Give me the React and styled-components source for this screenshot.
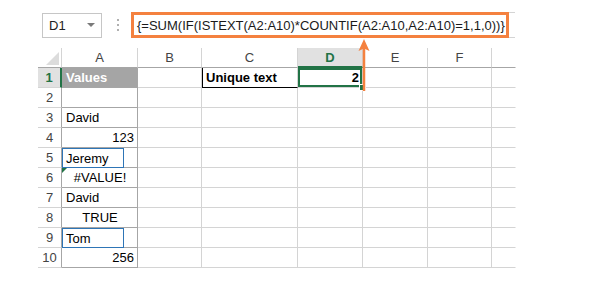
import React from "react";
import styled, { createGlobalStyle, css } from "styled-components";

const GlobalStyle = createGlobalStyle`
  html, body {
    margin: 0;
    padding: 0;
    background: #ffffff;
  }
  body {
    font-family: "Liberation Sans", Arial, sans-serif;
  }
`;

const GREEN = "#217346";
const ORANGE = "#f4813f";
const GRID = "#d4d4d4";
const DARK = "#a6a6a6";

const Page = styled.div`
  position: relative;
  width: 591px;
  height: 299px;
  box-sizing: border-box;
  padding: 12px 0 0 38px;
`;

const Toolbar = styled.div`
  display: flex;
  align-items: center;
  height: 26px;
`;

const NameBox = styled.div`
  margin-left: 4px;
  width: 60px;
  height: 25px;
  box-sizing: border-box;
  border: 1px solid #c6c6c6;
  display: flex;
  align-items: center;
  justify-content: space-between;
  padding: 0 6px 0 6px;
  font-size: 13px;
  color: #222;
`;

const DropArrow = styled.span`
  width: 0;
  height: 0;
  border-left: 4px solid transparent;
  border-right: 4px solid transparent;
  border-top: 4px solid #7a7a7a;
`;

const Dots = styled.div`
  margin-left: 15px;
  display: flex;
  flex-direction: column;
  gap: 3px;

  span {
    width: 2px;
    height: 2px;
    background: #b0b0b0;
  }
`;

const FormulaBar = styled.div`
  margin-left: 12px;
  width: 384px;
  height: 26px;
  box-sizing: border-box;
  border-top: 1px solid ${GRID};
  border-bottom: 1px solid ${GRID};
  display: flex;
`;

const FormulaBox = styled.div`
  flex: 1;
  margin: -1px 6px -1px 0;
  box-sizing: border-box;
  border: 3px solid ${ORANGE};
  display: flex;
  align-items: center;
  padding-left: 3px;
  font-size: 13px;
  color: #1a1a1a;
  white-space: nowrap;
`;

const Grid = styled.div`
  margin-top: 10px;
  display: grid;
  grid-template-columns: 24px 76px 64px 96px 65px 65px 64px 24px;
  grid-auto-rows: 20px;
  font-size: 13px;
`;

const ColHead = styled.div`
  box-sizing: border-box;
  border-right: 1px solid ${(p) => (p.$last ? "transparent" : GRID)};
  border-bottom: 1px solid ${DARK};
  display: flex;
  align-items: center;
  justify-content: center;
  color: #444;
  background: ${(p) => (p.$active ? "#e1e1e1" : "#fff")};
  ${(p) =>
    p.$active &&
    css`
      color: ${GREEN};
      font-weight: bold;
      border-bottom: 2px solid ${GREEN};
    `}
`;

const Corner = styled(ColHead)`
  position: relative;
  &::after {
    content: "";
    position: absolute;
    right: 2px;
    bottom: 2px;
    width: 0;
    height: 0;
    border-left: 13px solid transparent;
    border-bottom: 13px solid #dcdcdc;
  }
`;

const RowHead = styled.div`
  box-sizing: border-box;
  border-right: 1px solid ${DARK};
  border-bottom: 1px solid ${GRID};
  display: flex;
  align-items: center;
  justify-content: center;
  color: #444;
  ${(p) =>
    p.$active &&
    css`
      background: #e1e1e1;
      color: ${GREEN};
      font-weight: bold;
      border-right: 2px solid ${GREEN};
    `}
`;

const Cell = styled.div`
  position: relative;
  box-sizing: border-box;
  border-right: 1px solid ${(p) => (p.$last ? "transparent" : p.$dark ? DARK : GRID)};
  border-bottom: 1px solid ${(p) => (p.$dark ? DARK : GRID)};
  display: flex;
  align-items: center;
  justify-content: ${(p) =>
    p.$align === "right" ? "flex-end" : p.$align === "center" ? "center" : "flex-start"};
  padding: 0 3px 0 4px;
  color: #000;
  white-space: nowrap;
  font-weight: ${(p) => (p.$bold ? "bold" : "normal")};
  ${(p) =>
    p.$filled &&
    css`
      background: #a5a5a5;
      color: #fff;
    `}
  ${(p) =>
    p.$boxed &&
    css`
      border-bottom: 1px solid #000;
      box-shadow: inset 1px 0 0 #000;
    `}
  ${(p) =>
    p.$selected &&
    css`
      box-shadow: inset 0 0 0 2px ${GREEN};
    `}
`;

const TextBox = styled.span`
  margin-left: -4px;
  width: 62px;
  height: 20px;
  box-sizing: border-box;
  border: 1.5px solid #2e75b6;
  display: flex;
  align-items: center;
  padding-left: 3px;
  align-self: flex-start;
`;

const ErrorMark = styled.span`
  position: absolute;
  left: 0;
  top: 0;
  width: 0;
  height: 0;
  border-top: 5px solid ${GREEN};
  border-right: 5px solid transparent;
`;

const FillHandle = styled.span`
  position: absolute;
  right: -4px;
  bottom: -4px;
  width: 5px;
  height: 5px;
  background: ${GREEN};
  border: 1px solid #fff;
  z-index: 2;
`;

const Arrow = styled.svg`
  position: absolute;
  left: 358px;
  top: 39px;
  z-index: 3;
`;

const columns = ["A", "B", "C", "D", "E", "F"];

const rows = [
  { a: "Values", filled: true },
  {},
  { a: "David" },
  { a: "123", align: "right" },
  { a: "Jeremy", box: true },
  { a: "#VALUE!", align: "center", error: true },
  { a: "David" },
  { a: "TRUE", align: "center" },
  { a: "Tom", box: true },
  { a: "256", align: "right" },
];

export default function App() {
  return (
    <Page>
      <GlobalStyle />
      <Toolbar>
        <NameBox>
          D1
          <DropArrow />
        </NameBox>
        <Dots>
          <span />
          <span />
          <span />
        </Dots>
        <FormulaBar>
          <FormulaBox>{"{=SUM(IF(ISTEXT(A2:A10)*COUNTIF(A2:A10,A2:A10)=1,1,0))}"}</FormulaBox>
        </FormulaBar>
      </Toolbar>

      <Grid>
        <Corner />
        {columns.map((c) => (
          <ColHead key={c} $active={c === "D"}>
            {c}
          </ColHead>
        ))}
        <ColHead $last />

        {rows.map((r, i) => (
          <React.Fragment key={i}>
            <RowHead $active={i === 0}>{i + 1}</RowHead>
            <Cell $dark $align={r.align} $filled={r.filled} $bold={r.filled}>
              {r.error && <ErrorMark />}
              {r.box ? <TextBox>{r.a}</TextBox> : r.a}
            </Cell>
            <Cell />
            <Cell $boxed={i === 0} $bold={i === 0}>
              {i === 0 ? "Unique text" : ""}
            </Cell>
            <Cell $selected={i === 0} $align="right" $bold={i === 0}>
              {i === 0 && "2"}
              {i === 0 && <FillHandle />}
            </Cell>
            <Cell />
            <Cell />
            <Cell $last />
          </React.Fragment>
        ))}
      </Grid>

      <Arrow width="12" height="52" viewBox="0 0 12 52">
        <line x1="6" y1="8" x2="6" y2="52" stroke={ORANGE} strokeWidth="2.5" />
        <polygon points="6,0 11.5,12 6,9.5 0.5,12" fill={ORANGE} />
      </Arrow>
    </Page>
  );
}
